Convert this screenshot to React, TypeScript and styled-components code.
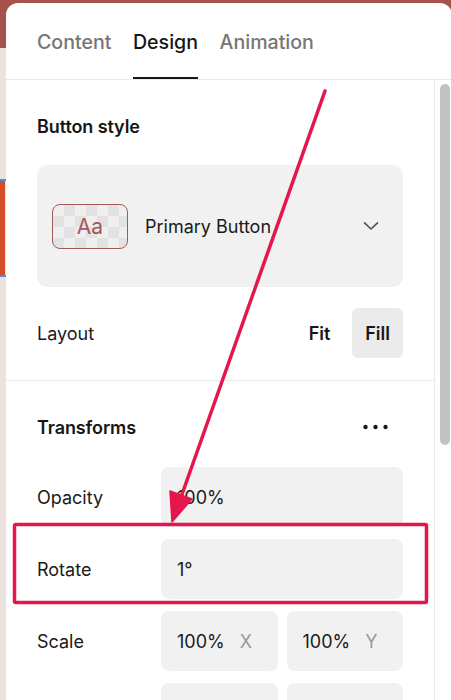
import React from "react";
import styled, { createGlobalStyle } from "styled-components";

const GlobalStyle = createGlobalStyle`
  html, body {
    margin: 0;
    padding: 0;
    background: #e9e2de;
  }
  * {
    box-sizing: border-box;
  }
`;

const Stage = styled.div`
  position: relative;
  width: 451px;
  height: 700px;
  overflow: hidden;
  padding: 3px 0 0 6px;
  font-family: Inter, "Noto Sans", "Liberation Sans", sans-serif;
  background:
    linear-gradient(#a5524d, #a5524d) 0 0 / 100% 48px no-repeat,
    linear-gradient(#4d8fd6, #4d8fd6) 0 179px / 6px 2px no-repeat,
    linear-gradient(#4d8fd6, #4d8fd6) 0 275px / 6px 2px no-repeat,
    linear-gradient(#d24e26, #d24e26) 0 181px / 5px 94px no-repeat,
    #e9e2de;
`;

const Panel = styled.div`
  width: 446px;
  height: 697px;
  background: #ffffff;
  border-radius: 12px 12px 0 0;
  overflow: hidden;
  display: flex;
  flex-direction: column;
`;

const Tabs = styled.div`
  display: flex;
  gap: 21.5px;
  height: 77px;
  padding-left: 31px;
  border-bottom: 1px solid #e8e8e8;
`;

const Tab = styled.div<{ $active?: boolean }>`
  display: flex;
  align-items: center;
  height: 76px;
  padding-top: 3px;
  font-size: 19.6px;
  font-weight: 500;
  color: ${(p) => (p.$active ? "#161616" : "#767676")};
  border-bottom: 2px solid ${(p) => (p.$active ? "#161616" : "transparent")};
`;

const Body = styled.div`
  flex: 1;
  display: flex;
  min-height: 0;
`;

const Scroller = styled.div`
  flex: 1;
  min-width: 0;
  overflow: hidden;
`;

const ScrollTrack = styled.div`
  width: 18px;
  border-left: 1px solid #ececec;
  padding: 4px 2px 0 5px;
`;

const ScrollThumb = styled.div`
  width: 10px;
  height: 361px;
  border-radius: 5px;
  background: #c2c2c2;
`;

const Section = styled.section<{ $divider?: boolean }>`
  display: flex;
  flex-direction: column;
  padding: 33px 31px 22px;
  border-bottom: ${(p) => (p.$divider ? "1px solid #e8e8e8" : "none")};
`;

const SectionHead = styled.div`
  display: flex;
  align-items: center;
  justify-content: space-between;
  height: 26px;
`;

const SectionTitle = styled.h3`
  margin: 0;
  font-size: 18px;
  font-weight: 600;
  color: #161616;
  letter-spacing: -0.1px;
`;

const StyleCard = styled.div`
  margin-top: 26px;
  height: 122px;
  border-radius: 10px;
  background: #f1f1f1;
  display: flex;
  align-items: center;
  padding: 0 24px 0 15px;
`;

const Chip = styled.div`
  width: 76px;
  height: 45px;
  border: 1.5px solid #a3595b;
  border-radius: 8px;
  display: flex;
  align-items: center;
  justify-content: center;
  font-size: 21px;
  color: #a3595b;
  background-color: #efefef;
  background-image:
    linear-gradient(45deg, #e2e2e2 25%, transparent 25%, transparent 75%, #e2e2e2 75%),
    linear-gradient(45deg, #e2e2e2 25%, transparent 25%, transparent 75%, #e2e2e2 75%);
  background-size: 22px 22px;
  background-position: 0 0, 11px 11px;
`;

const StyleName = styled.span`
  flex: 1;
  margin-left: 17px;
  font-size: 18px;
  color: #1a1a1a;
`;

const LayoutRow = styled.div`
  margin-top: 21px;
  display: flex;
  align-items: center;
  justify-content: space-between;
`;

const Label = styled.span`
  font-size: 18px;
  color: #1a1a1a;
`;

const Segments = styled.div`
  display: flex;
  gap: 7px;
`;

const Segment = styled.div<{ $active?: boolean }>`
  width: 51px;
  height: 50px;
  border-radius: 6px;
  display: flex;
  align-items: center;
  justify-content: center;
  font-size: 18px;
  font-weight: 600;
  color: #161616;
  background: ${(p) => (p.$active ? "#ebebeb" : "transparent")};
`;

const Fields = styled.div`
  margin-top: 27px;
  display: grid;
  grid-template-columns: 124px 1fr;
  row-gap: 12px;
  align-items: center;
`;

const Inputs = styled.div<{ $cols: number }>`
  display: grid;
  grid-template-columns: repeat(${(p) => p.$cols}, 1fr);
  gap: 9px;
`;

const Field = styled.div`
  height: 60px;
  border-radius: 8px;
  background: #f1f1f1;
  display: flex;
  align-items: center;
  gap: 15px;
  padding-left: 16px;
  font-size: 18px;
  color: #1a1a1a;
`;

const Axis = styled.span`
  color: #9a9a9a;
`;

const MoreButton = styled.div`
  display: flex;
  align-items: center;
  margin-right: 15px;
`;

const Overlay = styled.svg`
  position: absolute;
  inset: 0;
  pointer-events: none;
`;

const Chevron = () => (
  <svg width="16" height="10" viewBox="0 0 16 10" fill="none">
    <path d="M1.5 1.8 L8 8 L14.5 1.8" stroke="#555" strokeWidth="1.7" strokeLinecap="round" strokeLinejoin="round" />
  </svg>
);

const Dots = () => (
  <svg width="25" height="6" viewBox="0 0 25 6" fill="#1a1a1a">
    <circle cx="2.5" cy="3" r="2.2" />
    <circle cx="12.5" cy="3" r="2.2" />
    <circle cx="22.5" cy="3" r="2.2" />
  </svg>
);

type FieldValue = { v: string; axis?: string };

const transforms: { label: string; values: FieldValue[] }[] = [
  { label: "Opacity", values: [{ v: "100%" }] },
  { label: "Rotate", values: [{ v: "1°" }] },
  { label: "Scale", values: [{ v: "100%", axis: "X" }, { v: "100%", axis: "Y" }] },
  // next row is scrolled below the fold, only the top of its inputs shows
  { label: "", values: [{ v: "" }, { v: "" }] },
];

export default function App() {
  return (
    <>
      <GlobalStyle />
      <Stage>
        <Panel>
          <Tabs>
            <Tab>Content</Tab>
            <Tab $active>Design</Tab>
            <Tab>Animation</Tab>
          </Tabs>
          <Body>
            <Scroller>
              <Section $divider>
                <SectionHead>
                  <SectionTitle>Button style</SectionTitle>
                </SectionHead>
                <StyleCard>
                  <Chip>Aa</Chip>
                  <StyleName>Primary Button</StyleName>
                  <Chevron />
                </StyleCard>
                <LayoutRow>
                  <Label>Layout</Label>
                  <Segments>
                    <Segment>Fit</Segment>
                    <Segment $active>Fill</Segment>
                  </Segments>
                </LayoutRow>
              </Section>
              <Section>
                <SectionHead>
                  <SectionTitle>Transforms</SectionTitle>
                  <MoreButton>
                    <Dots />
                  </MoreButton>
                </SectionHead>
                <Fields>
                  {transforms.map((row, r) => (
                    <React.Fragment key={r}>
                      <Label>{row.label}</Label>
                      <Inputs $cols={row.values.length}>
                        {row.values.map((f, i) => (
                          <Field key={i}>
                            {f.v && <span>{f.v}</span>}
                            {f.axis && <Axis>{f.axis}</Axis>}
                          </Field>
                        ))}
                      </Inputs>
                    </React.Fragment>
                  ))}
                </Fields>
              </Section>
            </Scroller>
            <ScrollTrack>
              <ScrollThumb />
            </ScrollTrack>
          </Body>
        </Panel>
        <Overlay width="451" height="700" viewBox="0 0 451 700">
          <rect x="14.5" y="524.5" width="412" height="78" rx="1.5" fill="none" stroke="#e5164b" strokeWidth="3.5" />
          <line x1="325" y1="91" x2="180" y2="500" stroke="#e5164b" strokeWidth="3.5" strokeLinecap="round" />
          <polygon points="172,522 170,491 192,499" fill="#e5164b" stroke="#e5164b" strokeWidth="1.5" strokeLinejoin="round" />
        </Overlay>
      </Stage>
    </>
  );
}
